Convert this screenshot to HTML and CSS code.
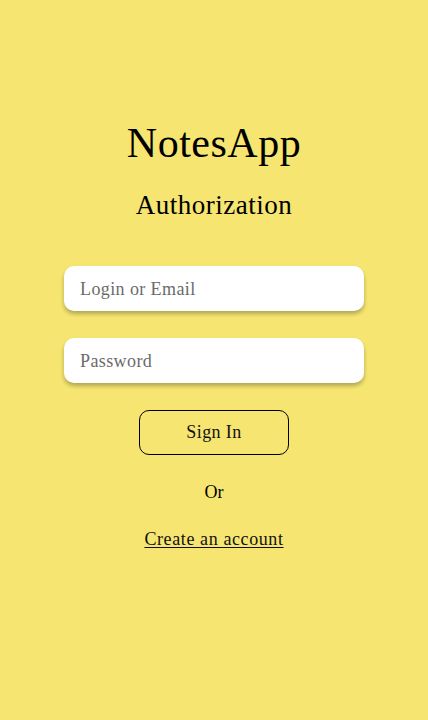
FILE: index.html
```html
<!DOCTYPE html>
<html lang="en">
<head>
<meta charset="utf-8">
<title>NotesApp</title>
<link rel="stylesheet" href="styles.css">
</head>
<body>
<main class="auth">
  <h1 class="title">NotesApp</h1>
  <h2 class="subtitle">Authorization</h2>
  <form class="form">
    <input class="field" type="text" placeholder="Login or Email">
    <input class="field" type="password" placeholder="Password">
    <button class="btn" type="button">Sign In</button>
  </form>
  <p class="or">Or</p>
  <a class="link" href="#">Create an account</a>
</main>
</body>
</html>
```

FILE: styles.css
```css
html, body {
  margin: 0;
  padding: 0;
  height: 100%;
}
body {
  background: #f6e671;
  font-family: "Liberation Serif", "Times New Roman", serif;
  color: #000;
}
.auth {
  display: flex;
  flex-direction: column;
  align-items: center;
  padding-top: 118px;
}
.title {
  margin: 0;
  font-size: 42px;
  line-height: 50px;
  font-weight: normal;
  letter-spacing: 0.5px;
}
.subtitle {
  margin: 21px 0 0;
  font-size: 27px;
  line-height: 32px;
  font-weight: normal;
  letter-spacing: 0.5px;
}
.form {
  margin-top: 45px;
  display: flex;
  flex-direction: column;
  align-items: center;
  gap: 27px;
}
.field {
  box-sizing: border-box;
  width: 300px;
  height: 45px;
  border: none;
  border-radius: 10px;
  background: #fff;
  padding: 1px 16px 0;
  font-family: inherit;
  font-size: 18px;
  letter-spacing: 0.4px;
  color: #333;
  box-shadow: 0 3px 4px rgba(0, 0, 0, 0.28);
  outline: none;
}
.field::placeholder {
  color: #6b6b6b;
}
.btn {
  box-sizing: border-box;
  width: 150px;
  height: 45px;
  border: 1px solid #000;
  border-radius: 10px;
  background: transparent;
  font-family: inherit;
  font-size: 18px;
  letter-spacing: 0.4px;
  color: #111;
  padding: 0;
}
.or {
  margin: 25px 0 0;
  font-size: 18px;
  line-height: 24px;
}
.link {
  margin-top: 23px;
  font-size: 18px;
  line-height: 24px;
  letter-spacing: 0.6px;
  color: #111;
  text-decoration: underline;
  text-underline-offset: 2px;
}
```
